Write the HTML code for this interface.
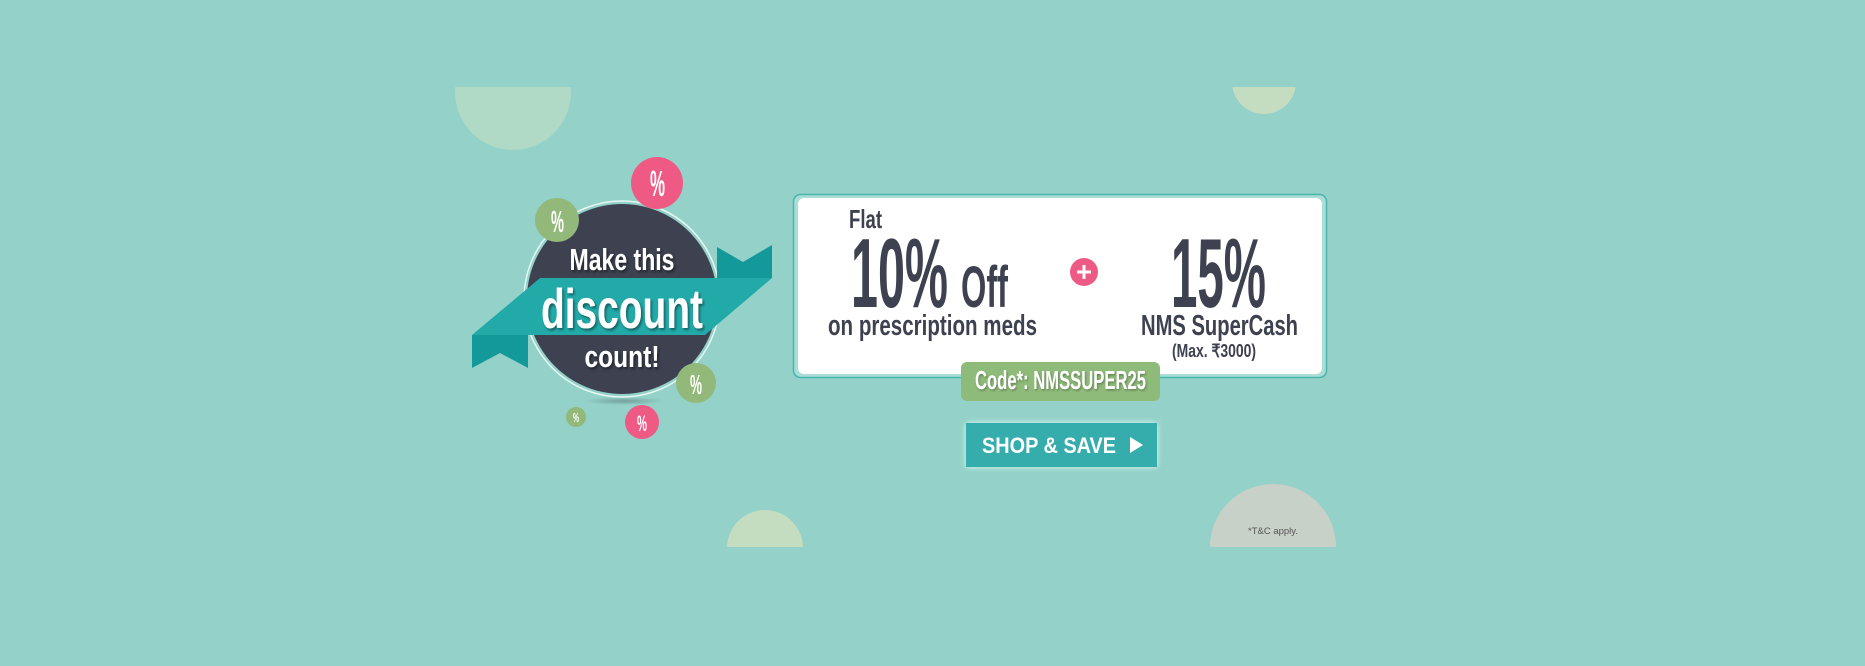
<!DOCTYPE html>
<html><head><meta charset="utf-8"><style>
html,body{margin:0;padding:0;background:#93d1c9;width:1865px;height:666px;overflow:hidden}
svg{display:block}
.c{font-family:"Liberation Sans Narrow","Liberation Sans",sans-serif;font-weight:bold}
</style></head><body>
<svg width="1865" height="666" viewBox="0 0 1865 666" xmlns="http://www.w3.org/2000/svg">
<defs>
<clipPath id="cl"><rect x="0" y="87" width="1865" height="460"/></clipPath>
<filter id="ts" x="-10%" y="-10%" width="130%" height="140%"><feDropShadow dx="1.5" dy="2" stdDeviation="1.2" flood-color="#000" flood-opacity="0.45"/></filter>
<filter id="ts2" x="-10%" y="-10%" width="130%" height="140%"><feDropShadow dx="1" dy="1.5" stdDeviation="1" flood-color="#000" flood-opacity="0.3"/></filter>
<filter id="glow" x="-20%" y="-40%" width="140%" height="180%"><feDropShadow dx="0" dy="0" stdDeviation="3" flood-color="#e8fffb" flood-opacity="0.9"/></filter>
<radialGradient id="sh"><stop offset="0" stop-color="#5f7f7c" stop-opacity="0.6"/><stop offset="1" stop-color="#5f7f7c" stop-opacity="0"/></radialGradient>
</defs>
<rect width="1865" height="666" fill="#93d1c9"/>
<g clip-path="url(#cl)">
<circle cx="513" cy="92" r="58" fill="#b0d9c6"/>
<circle cx="1264" cy="82" r="32" fill="#c4dcbf"/>
<circle cx="765" cy="548" r="38" fill="#c4dcbf"/>
<circle cx="1273" cy="547" r="63" fill="#c8d1c8"/>
</g>
<text x="1273" y="534" font-family="Liberation Sans,sans-serif" font-size="9.5" fill="#555" text-anchor="middle">*T&amp;C apply.</text>

<ellipse cx="624" cy="401" rx="40" ry="4" fill="url(#sh)"/>
<circle cx="622" cy="299" r="98" fill="none" stroke="#e6f6f2" stroke-width="1.5"/>
<circle cx="622" cy="299" r="95" fill="#3d4150"/>
<polygon points="717,247 743,262 772,245 772,278 717,278" fill="#14999a"/>
<polygon points="472,335 528,335 528,368 500,353 472,368" fill="#14999a"/>
<polygon points="540,278 772,278 705,335 472,335" fill="#22aaa9"/>
<g class="c" fill="#fff" text-anchor="middle" filter="url(#ts)">
<text x="622" y="270" font-size="31" textLength="105" lengthAdjust="spacingAndGlyphs">Make this</text>
<text x="622" y="328" font-size="56" textLength="162" lengthAdjust="spacingAndGlyphs">discount</text>
<text x="622" y="367" font-size="31" textLength="75" lengthAdjust="spacingAndGlyphs">count!</text>
</g>
<circle cx="657" cy="183" r="26" fill="#ef5a85"/>
<circle cx="557" cy="220" r="22" fill="#93b97a"/>
<circle cx="696" cy="383" r="20" fill="#93b97a"/>
<circle cx="642" cy="422" r="17" fill="#ef5a85"/>
<circle cx="576" cy="417" r="10" fill="#93b97a"/>
<g class="c" fill="#fff">
<text x="650" y="196" font-size="36" textLength="15" lengthAdjust="spacingAndGlyphs">%</text>
<text x="551" y="232" font-size="31" textLength="13" lengthAdjust="spacingAndGlyphs">%</text>
<text x="690" y="394" font-size="28" textLength="12" lengthAdjust="spacingAndGlyphs">%</text>
<text x="637" y="431" font-size="22" textLength="10" lengthAdjust="spacingAndGlyphs">%</text>
<text x="573" y="422" font-size="13" textLength="6" lengthAdjust="spacingAndGlyphs">%</text>
</g>

<rect x="793.5" y="194.5" width="533" height="183" rx="7" fill="#a9ddd6" stroke="#4cb5ad" stroke-width="1.5"/>
<rect x="798" y="198" width="524" height="176" rx="6" fill="#fff"/>
<g class="c" fill="#3d4150">
<text x="849" y="228" font-size="26" textLength="33" lengthAdjust="spacingAndGlyphs">Flat</text>
<text x="851" y="307" font-size="98" textLength="97" lengthAdjust="spacingAndGlyphs">10%</text>
<text x="961" y="307" font-size="58" textLength="47" lengthAdjust="spacingAndGlyphs">Off</text>
<text x="828" y="335" font-size="29" textLength="209" lengthAdjust="spacingAndGlyphs">on prescription meds</text>
<text x="1171" y="307" font-size="98" textLength="95" lengthAdjust="spacingAndGlyphs">15%</text>
<text x="1141" y="335" font-size="29" textLength="157" lengthAdjust="spacingAndGlyphs">NMS SuperCash</text>
<text x="1172" y="357" font-size="18" textLength="84" lengthAdjust="spacingAndGlyphs">(Max. ₹3000)</text>
</g>
<circle cx="1084" cy="272" r="14" fill="#ef5a85"/>
<path d="M1084 265v14M1077 272h14" stroke="#fff" stroke-width="3"/>

<rect x="961" y="362" width="199" height="39" rx="6" fill="#8fbb7a"/>
<text class="c" x="975" y="389" font-size="26" fill="#fff" textLength="171" lengthAdjust="spacingAndGlyphs" filter="url(#ts2)">Code*: NMSSUPER25</text>

<rect x="966" y="423" width="191" height="44" fill="#34adad" filter="url(#glow)"/>
<text x="982" y="453" font-family="Liberation Sans,sans-serif" font-weight="bold" font-size="22" fill="#fff" textLength="134" lengthAdjust="spacingAndGlyphs">SHOP &amp; SAVE</text>
<polygon points="1130,437 1143,445 1130,453" fill="#fff"/>
</svg>
</body></html>
